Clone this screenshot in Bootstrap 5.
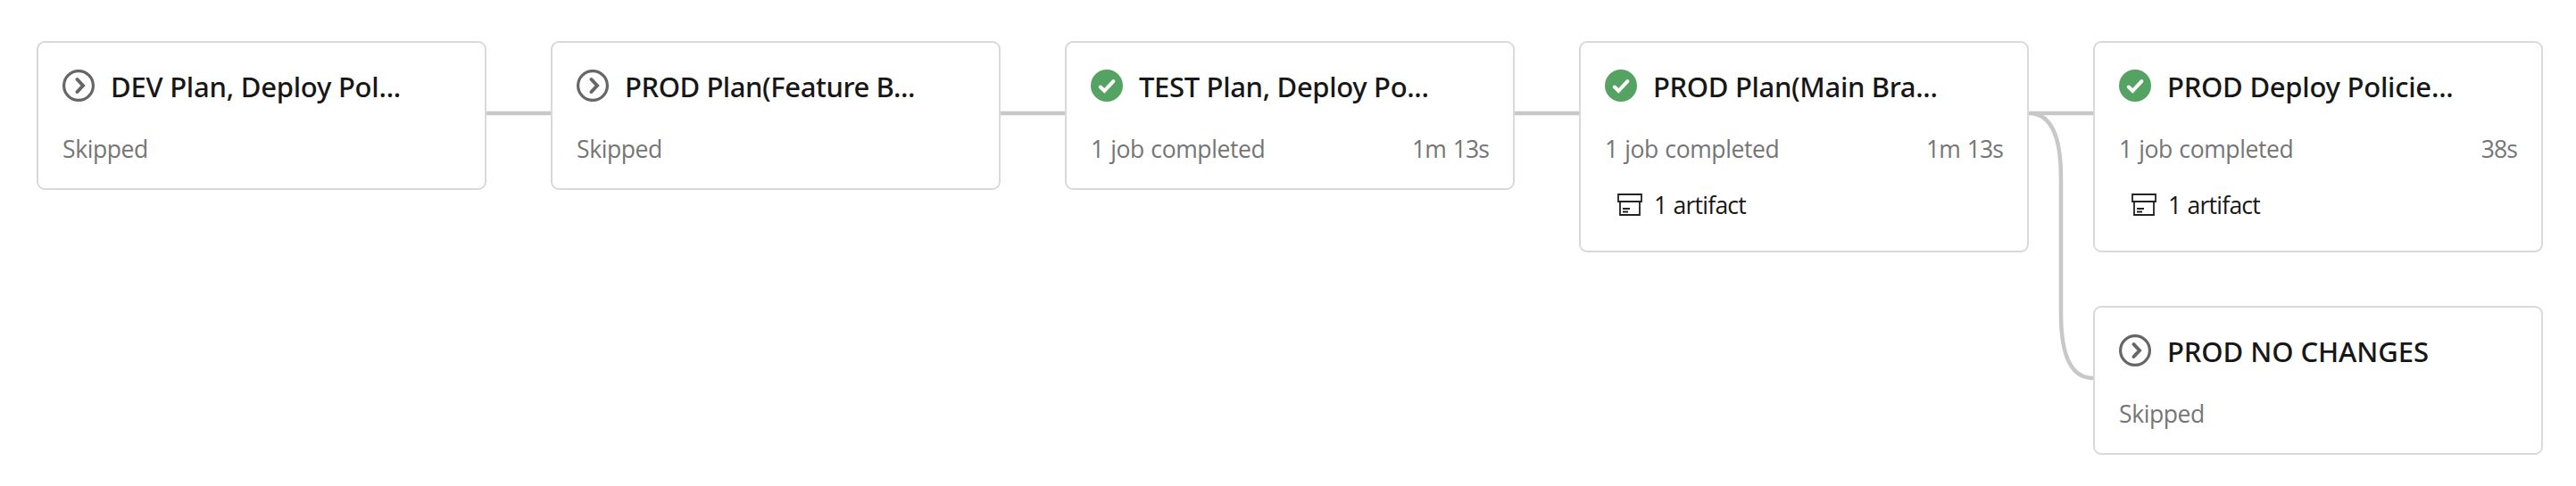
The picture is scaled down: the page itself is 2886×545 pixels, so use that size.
<!DOCTYPE html>
<html lang="en">
<head>
<meta charset="utf-8">
<title>Pipeline stages</title>
<link href="https://cdn.jsdelivr.net/npm/bootstrap@5.3.0/dist/css/bootstrap.min.css" rel="stylesheet">
<style>
  body { background: #fff; font-family: "Open Sans", "Noto Sans", sans-serif; overflow: hidden; }
  .pipeline { padding: 46px 0 0 41px; }
  .stage { width: 504px; height: 167px; padding: 30px 28px 0 27px; border: 2px solid #d9d9d9; border-radius: 9px; background: #fff; }
  .stage.with-artifact { height: 237px; }
  .stage-stack { gap: 60px; }
  .stage-head { height: 36px; gap: 18px; }
  .stage-icon { width: 36px; height: 36px; }
  .stage-title { font: 500 31px/40px "Noto Sans", sans-serif; color: #171717; letter-spacing: -.23px; white-space: nowrap; margin-top: 1px; }
  .t-feature { letter-spacing: -.43px; }
  .t-test { letter-spacing: -.33px; }
  .t-main { letter-spacing: -.33px; }
  .t-none { letter-spacing: -.07px; }
  .stage-meta { margin-top: 35px; font-size: 26.5px; line-height: 36px; color: #757575; letter-spacing: -.4px; word-spacing: 1px; }
  .duration { letter-spacing: -.9px; word-spacing: 2px; margin-right: -1px; }
  .artifact { margin-top: 27px; padding-left: 14px; gap: 13px; font-size: 26.5px; line-height: 36px; color: #171717; letter-spacing: -.75px; word-spacing: 1px; }
  .link-line { width: 72px; height: 400px; overflow: visible; fill: none; stroke: #c8c8c8; stroke-width: 4.5; }
</style>
</head>
<body>
<svg class="d-none" xmlns="http://www.w3.org/2000/svg">
  <symbol id="skipped" viewBox="0 0 36 36">
    <circle cx="18" cy="18" r="16.4" fill="none" stroke="#666" stroke-width="3.2"/>
    <path d="M16.5 11 23 18l-6.500 7" fill="none" stroke="#666" stroke-width="4" stroke-linecap="round" stroke-linejoin="miter"/>
  </symbol>
  <symbol id="success" viewBox="0 0 36 36">
    <circle cx="18" cy="18" r="18" fill="#55a362"/>
    <path d="M10.800 19.500 15.300 23.900 25.400 13.200" fill="none" stroke="#fff" stroke-width="4" stroke-linecap="round"/>
  </symbol>
  <symbol id="box" viewBox="0 0 28 26">
    <path d="M1 1h26v8H1zM3 9v15h22V9M6 17h8M6 20.500h6" fill="none" stroke="#222" stroke-width="1.800"/>
  </symbol>
</svg>
<main class="pipeline d-flex align-items-start">
  <section class="stage flex-shrink-0">
    <div class="stage-head d-flex align-items-center"><svg class="stage-icon flex-shrink-0"><use href="#skipped"/></svg><div class="stage-title">DEV Plan, Deploy Pol...</div></div>
    <div class="stage-meta">Skipped</div>
  </section>
  <svg class="link-line flex-shrink-0"><path d="M0 81H72"/></svg>
  <section class="stage flex-shrink-0">
    <div class="stage-head d-flex align-items-center"><svg class="stage-icon flex-shrink-0"><use href="#skipped"/></svg><div class="stage-title t-feature">PROD Plan(Feature B...</div></div>
    <div class="stage-meta">Skipped</div>
  </section>
  <svg class="link-line flex-shrink-0"><path d="M0 81H72"/></svg>
  <section class="stage flex-shrink-0">
    <div class="stage-head d-flex align-items-center"><svg class="stage-icon flex-shrink-0"><use href="#success"/></svg><div class="stage-title t-test">TEST Plan, Deploy Po...</div></div>
    <div class="stage-meta d-flex justify-content-between"><span>1 job completed</span><span class="duration">1m 13s</span></div>
  </section>
  <svg class="link-line flex-shrink-0"><path d="M0 81H72"/></svg>
  <section class="stage with-artifact flex-shrink-0">
    <div class="stage-head d-flex align-items-center"><svg class="stage-icon flex-shrink-0"><use href="#success"/></svg><div class="stage-title t-main">PROD Plan(Main Bra...</div></div>
    <div class="stage-meta d-flex justify-content-between"><span>1 job completed</span><span class="duration">1m 13s</span></div>
    <div class="artifact d-flex align-items-center"><svg width="28" height="26"><use href="#box"/></svg><span>1 artifact</span></div>
  </section>
  <svg class="link-line flex-shrink-0"><path d="M0 81H72M0 81C24 81 36 105 36 153V306C36 354 48 378 72 378"/></svg>
  <div class="stage-stack d-flex flex-column flex-shrink-0">
    <section class="stage with-artifact">
      <div class="stage-head d-flex align-items-center"><svg class="stage-icon flex-shrink-0"><use href="#success"/></svg><div class="stage-title">PROD Deploy Policie...</div></div>
      <div class="stage-meta d-flex justify-content-between"><span>1 job completed</span><span class="duration">38s</span></div>
      <div class="artifact d-flex align-items-center"><svg width="28" height="26"><use href="#box"/></svg><span>1 artifact</span></div>
    </section>
    <section class="stage">
      <div class="stage-head d-flex align-items-center"><svg class="stage-icon flex-shrink-0"><use href="#skipped"/></svg><div class="stage-title t-none">PROD NO CHANGES</div></div>
      <div class="stage-meta">Skipped</div>
    </section>
  </div>
</main>
<script src="https://cdn.jsdelivr.net/npm/bootstrap@5.3.0/dist/js/bootstrap.bundle.min.js"></script>
</body>
</html>
